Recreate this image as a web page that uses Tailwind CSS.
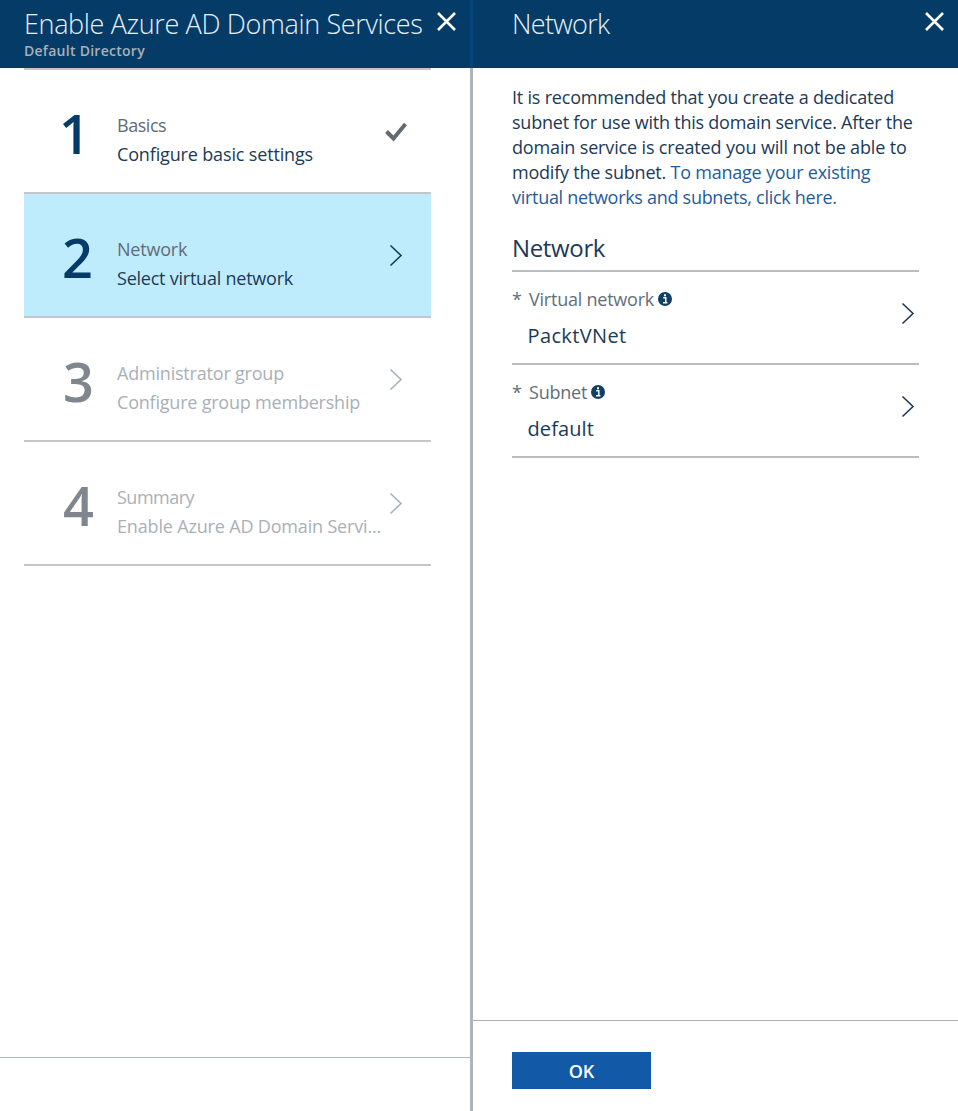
<!DOCTYPE html>
<html lang="en">
<head>
<meta charset="utf-8">
<title>Enable Azure AD Domain Services</title>
<script src="https://cdn.jsdelivr.net/npm/@tailwindcss/browser@4"></script>
</head>
<body class="flex h-[1111px] w-[958px] overflow-hidden bg-white font-['Open_Sans','Noto_Sans',sans-serif] text-lg text-[#1b3a58]">

<!-- Wizard steps -->
<section class="flex w-[470px] shrink-0 flex-col">
  <header class="flex h-[68px] shrink-0 justify-between bg-[#053b67] pl-6 pr-[14px]">
    <div class="whitespace-nowrap pt-[5px]">
      <h1 class="text-[27px] font-light leading-[38px] tracking-[-0.35px] text-[#e6f1f8]">Enable Azure AD Domain Services</h1>
      <p class="text-sm font-semibold leading-4 tracking-[0.27px] text-[#a9b0b8]">Default Directory</p>
    </div>
    <svg class="mt-[12px] size-[19px] shrink-0" viewBox="0 0 19 19" fill="none" stroke="#fff" stroke-width="2.6"><path d="M1 1 18 18M18 1 1 18"/></svg>
  </header>

  <ol class="ml-6 w-[407px] grow border-t-2 border-[#c3c7cb]">
    <li class="flex h-[124px] border-b-2 border-[#c3c7cb] pl-[37px]">
      <span class="w-14 pt-[27px] text-[54px] font-semibold leading-[72px] -indent-[2px] text-[#053b67]">1</span>
      <div class="w-[268px] whitespace-nowrap pt-[41px] leading-[29px]">
        <p class="tracking-[-0.45px] text-[#5f6b77]">Basics</p>
        <p class="tracking-[-0.15px]">Configure basic settings</p>
      </div>
      <svg class="mt-[52px] h-5 w-[22px] shrink-0" viewBox="0 0 22 20" fill="none" stroke="#626a72" stroke-width="4"><path d="M1.5 9.5 8.5 16.5 20.5 2"/></svg>
    </li>
    <li class="flex h-[124px] border-b-2 border-[#c3c7cb] bg-[#bfecfc] pl-[37px]">
      <span class="w-14 pt-[27px] text-[54px] font-semibold leading-[72px] indent-[1px] text-[#053b67]">2</span>
      <div class="w-[268px] whitespace-nowrap pt-[41px] leading-[29px]">
        <p class="tracking-[-0.2px] text-[#5f6b77]">Network</p>
        <p class="tracking-[-0.23px]">Select virtual network</p>
      </div>
      <svg class="ml-[4px] mt-[50px] h-[23px] w-[14px] shrink-0" viewBox="0 0 14 23" fill="none" stroke="#1b3a58" stroke-width="1.6"><path d="M1.5 1.5 12 11.5 1.5 21.5"/></svg>
    </li>
    <li class="flex h-[124px] border-b-2 border-[#c3c7cb] pl-[37px] text-[#a9b0b8]">
      <span class="w-14 pt-[27px] text-[54px] font-semibold leading-[72px] indent-[2px] text-[#7f868d]">3</span>
      <div class="w-[268px] whitespace-nowrap pt-[41px] leading-[29px]">
        <p class="tracking-[-0.2px]">Administrator group</p>
        <p class="tracking-[-0.21px]">Configure group membership</p>
      </div>
      <svg class="ml-[4px] mt-[50px] h-[23px] w-[14px] shrink-0" viewBox="0 0 14 23" fill="none" stroke="#a9b0b8" stroke-width="1.6"><path d="M1.5 1.5 12 11.5 1.5 21.5"/></svg>
    </li>
    <li class="flex h-[124px] border-b-2 border-[#c3c7cb] pl-[37px] text-[#a9b0b8]">
      <span class="w-14 pt-[27px] text-[54px] font-semibold leading-[72px] indent-[2px] text-[#7f868d]">4</span>
      <div class="w-[268px] whitespace-nowrap pt-[41px] leading-[29px]">
        <p class="tracking-[-0.5px]">Summary</p>
        <p class="tracking-[-0.17px]">Enable Azure AD Domain Servi...</p>
      </div>
      <svg class="ml-[4px] mt-[50px] h-[23px] w-[14px] shrink-0" viewBox="0 0 14 23" fill="none" stroke="#a9b0b8" stroke-width="1.6"><path d="M1.5 1.5 12 11.5 1.5 21.5"/></svg>
    </li>
  </ol>

  <footer class="h-[54px] shrink-0 border-t border-[#b0b5ba]"></footer>
</section>

<div class="flex w-[3px] shrink-0 flex-col">
  <div class="h-[68px] bg-[#07447c]"></div>
  <div class="grow bg-[#b0b5bc]"></div>
</div>

<!-- Network blade -->
<section class="flex w-[485px] shrink-0 flex-col">
  <header class="flex h-[68px] shrink-0 justify-between bg-[#053b67] pl-[39px] pr-[14px]">
    <h1 class="pt-[5px] text-[27px] font-light leading-[38px] tracking-[-0.7px] text-[#e6f1f8]">Network</h1>
    <svg class="mt-[12px] size-[19px] shrink-0" viewBox="0 0 19 19" fill="none" stroke="#fff" stroke-width="2.6"><path d="M1 1 18 18M18 1 1 18"/></svg>
  </header>

  <main class="ml-[39px] w-[407px] grow pt-[17px]">
    <p class="whitespace-nowrap leading-[24.9px]">
      <span class="tracking-[-0.2px]">It is recommended that you create a dedicated</span><br>
      <span class="tracking-[-0.23px]">subnet for use with this domain service. After the</span><br>
      <span class="tracking-[-0.15px]">domain service is created you will not be able to</span><br>
      <span class="tracking-[-0.22px]">modify the subnet. <a class="text-[#1f5c9a]">To manage your existing</a></span><br>
      <a class="tracking-[-0.29px] text-[#1f5c9a]">virtual networks and subnets, click here.</a>
    </p>

    <h2 class="mt-[21px] h-[41.5px] border-b-2 border-[#b8bdc2] text-2xl leading-[34px] tracking-[-0.35px]">Network</h2>

    <div class="flex h-[93px] justify-between border-b-2 border-[#b8bdc2]">
      <div>
        <div class="flex items-center pt-[12px] leading-[30px] text-[#626e7a]">
          <span class="w-[17px]">*</span>
          <span class="tracking-[-0.23px]">Virtual network</span>
          <svg class="ml-1 size-[14px]" viewBox="0 0 14 14"><circle cx="7" cy="7" r="7" fill="#123f66"/><path d="M5.2 5.7h2.6v4.8M5 10.8h4.4" fill="none" stroke="#fff" stroke-width="1.4"/><path d="M6 2.3h2v2H6z" fill="#fff"/></svg>
        </div>
        <p class="pl-[15.5px] pt-[7px] text-xl leading-[30px] tracking-[0.37px]">PacktVNet</p>
      </div>
      <svg class="mr-[4px] mt-[30px] h-[23px] w-[14px]" viewBox="0 0 14 23" fill="none" stroke="#1b3a58" stroke-width="1.6"><path d="M1.5 1.5 12 11.5 1.5 21.5"/></svg>
    </div>

    <div class="flex h-[93px] justify-between border-b-2 border-[#b8bdc2]">
      <div>
        <div class="flex items-center pt-[12px] leading-[30px] text-[#626e7a]">
          <span class="w-[17px]">*</span>
          <span class="tracking-[-0.23px]">Subnet</span>
          <svg class="ml-1 size-[14px]" viewBox="0 0 14 14"><circle cx="7" cy="7" r="7" fill="#123f66"/><path d="M5.2 5.7h2.6v4.8M5 10.8h4.4" fill="none" stroke="#fff" stroke-width="1.4"/><path d="M6 2.3h2v2H6z" fill="#fff"/></svg>
        </div>
        <p class="pl-[15.5px] pt-[7px] text-xl leading-[30px] tracking-[0.1px]">default</p>
      </div>
      <svg class="mr-[4px] mt-[30px] h-[23px] w-[14px]" viewBox="0 0 14 23" fill="none" stroke="#1b3a58" stroke-width="1.6"><path d="M1.5 1.5 12 11.5 1.5 21.5"/></svg>
    </div>
  </main>

  <footer class="h-[91px] shrink-0 border-t border-[#a8aeb5] pl-[39px] pt-[31px]">
    <button class="h-[37px] w-[139px] bg-[#125aa8] pt-[2px] font-semibold leading-[35px] text-white">OK</button>
  </footer>
</section>
</body>
</html>
